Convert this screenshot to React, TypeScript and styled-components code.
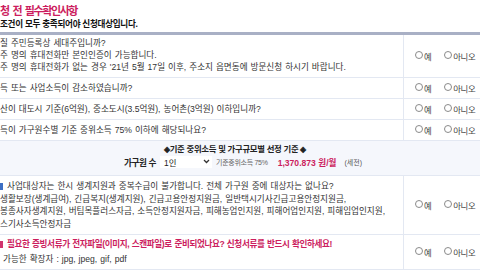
import React from "react";
import styled, { createGlobalStyle } from "styled-components";

const GlobalStyle = createGlobalStyle`
  html, body { margin: 0; padding: 0; background: #fff; overflow: hidden; }
  body {
    width: 480px; height: 270px;
    font-family: "Liberation Sans", "Noto Sans CJK KR", sans-serif;
    color: #333;
  }
`;

const Page = styled.div`
  width: 480px;
  padding-top: 4px;
`;

const Title = styled.h2`
  margin: 0;
  font-size: 11px;
  line-height: 14px;
  letter-spacing: -1.4px;
  word-spacing: 2px;
  font-weight: 700;
  color: #cc1d5e;
`;

const Sub = styled.p`
  margin: 1px 0 0;
  font-size: 8.6px;
  line-height: 11px;
  letter-spacing: -0.3px;
  font-weight: 700;
  color: #111;
`;

const Table = styled.div`
  margin-top: 2px;
  border-top: 3px solid #a9b0c5;
`;

const Row = styled.div`
  display: grid;
  grid-template-columns: 403px 1fr;
  border-bottom: 1px solid #e3e8f2;
`;

const Question = styled.div<{ $top?: number; $bottom?: number; $lh?: number }>`
  padding: ${(p) => p.$top ?? 4}px 0 ${(p) => p.$bottom ?? 4}px;
  font-size: 8.6px;
  line-height: ${(p) => p.$lh ?? 12}px;
  letter-spacing: 0px;
  word-spacing: 0.6px;
  color: #333;
`;

const Line = styled.div<{ $accent?: boolean }>`
  display: flex;
  align-items: center;
  white-space: nowrap;
  color: ${(p) => (p.$accent ? "#cc1d5e" : "inherit")};
  font-weight: ${(p) => (p.$accent ? 700 : 400)};
  letter-spacing: ${(p) => (p.$accent ? "-0.4px" : "0px")};
`;

const Bullet = styled.span<{ $color: string }>`
  display: inline-block;
  width: 3px;
  height: 7px;
  background: ${(p) => p.$color};
  margin-right: 4px;
`;

const Answer = styled.div`
  border-left: 1px solid #e3e8f2;
  display: flex;
  align-items: center;
  padding-left: 11px;
  gap: 13px;
`;

const Option = styled.label`
  display: inline-flex;
  align-items: center;
  font-size: 8.4px;
  letter-spacing: -0.4px;
  color: #444;
  white-space: nowrap;
`;

const Circle = styled.span`
  display: inline-block;
  width: 6px;
  height: 6px;
  border: 1px solid #8a8a8a;
  border-radius: 50%;
  background: #fff;
  margin-right: 1px;
  transform: translateY(-1px);
`;

const InfoBox = styled.div`
  background: #f5f7fc;
  border-bottom: 1px solid #e3e8f2;
  padding: 2px 0 7px;
  display: flex;
  flex-direction: column;
  align-items: center;
`;

const InfoTitle = styled.div`
  font-size: 8.4px;
  line-height: 12px;
  letter-spacing: -0.3px;
  font-weight: 700;
  color: #222;
  margin-left: -10px;
`;

const InfoLine = styled.div`
  display: flex;
  align-items: center;
  margin-left: 6px;
  height: 13px;
`;

const Label = styled.span`
  font-size: 8.6px;
  letter-spacing: -0.4px;
  font-weight: 700;
  color: #222;
  margin-right: 4px;
`;

const Select = styled.div`
  width: 52px;
  height: 12px;
  box-sizing: border-box;
  background: #fff;
  display: flex;
  align-items: center;
  justify-content: space-between;
  padding: 0 2px 0 4px;
  font-size: 8.4px;
  color: #222;
  margin-right: 4px;
`;

const Small = styled.span`
  font-size: 7px;
  letter-spacing: -0.3px;
  color: #666;
  margin-right: 10px;
`;

const Amount = styled.span`
  font-size: 8.6px;
  font-weight: 700;
  color: #cc1d5e;
  margin-right: 8px;
`;

const Note = styled.span`
  font-size: 7px;
  color: #555;
`;

const Radios = () => (
  <Answer>
    <Option>
      <Circle />예
    </Option>
    <Option>
      <Circle />아니오
    </Option>
  </Answer>
);

export default function App() {
  return (
    <>
      <GlobalStyle />
      <Page>
        <Title>청 전 필수확인사항</Title>
        <Sub>조건이 모두 충족되어야 신청대상입니다.</Sub>
        <Table>
          <Row>
            <Question $top={2} $bottom={4}>
              <Line>질 주민등록상 세대주입니까?</Line>
              <Line>주 명의 휴대전화만 본인인증이 가능합니다.</Line>
              <Line>주 명의 휴대전화가 없는 경우 '21년 5월 17일 이후, 주소지 읍면동에 방문신청 하시기 바랍니다.</Line>
            </Question>
            <Radios />
          </Row>
          <Row>
            <Question>
              <Line>득 또는 사업소득이 감소하였습니까?</Line>
            </Question>
            <Radios />
          </Row>
          <Row>
            <Question>
              <Line>산이 대도시 기준(6억원), 중소도시(3.5억원), 농어촌(3억원) 이하입니까?</Line>
            </Question>
            <Radios />
          </Row>
          <Row>
            <Question>
              <Line>득이 가구원수별 기준 중위소득 75% 이하에 해당되나요?</Line>
            </Question>
            <Radios />
          </Row>
          <InfoBox>
            <InfoTitle>◈기준 중위소득 및 가구규모별 선정 기준 ◈</InfoTitle>
            <InfoLine>
              <Label>가구원 수</Label>
              <Select>
                <span>1인</span>
                <svg width="7" height="5" viewBox="0 0 7 5">
                  <path d="M1 1 L3.5 3.5 L6 1" fill="none" stroke="#333" strokeWidth="1.3" />
                </svg>
              </Select>
              <Small>기준중위소득 75%</Small>
              <Amount>1,370.873 원/월</Amount>
              <Note>(세전)</Note>
            </InfoLine>
          </InfoBox>
          <Row>
            <Question $top={4} $bottom={3} $lh={12.7}>
              <Line>
                <Bullet $color="#3d6fc4" />사업대상자는 한시 생계지원과 중복수급이 불가합니다. 전체 가구원 중에 대상자는 없나요?
              </Line>
              <Line>생활보장(생계급여), 긴급복지(생계지원), 긴급고용안정지원금, 일반택시기사긴급고용안정지원금,</Line>
              <Line>봉종사자생계지원, 버팀목플러스자금, 소득안정지원자금, 피해농업인지원, 피해어업인지원, 피해임업인지원,</Line>
              <Line>스기사소득안정자금</Line>
            </Question>
            <Radios />
          </Row>
          <Row>
            <Question $top={2} $bottom={2} $lh={15}>
              <Line $accent>
                <Bullet $color="#d0346e" />필요한 증빙서류가 전자파일(이미지, 스캔파일)로 준비되었나요? 신청서류를 반드시 확인하세요!
              </Line>
              <Line>&nbsp;가능한 확장자 : jpg, jpeg, gif, pdf</Line>
            </Question>
            <Radios />
          </Row>
        </Table>
      </Page>
    </>
  );
}
